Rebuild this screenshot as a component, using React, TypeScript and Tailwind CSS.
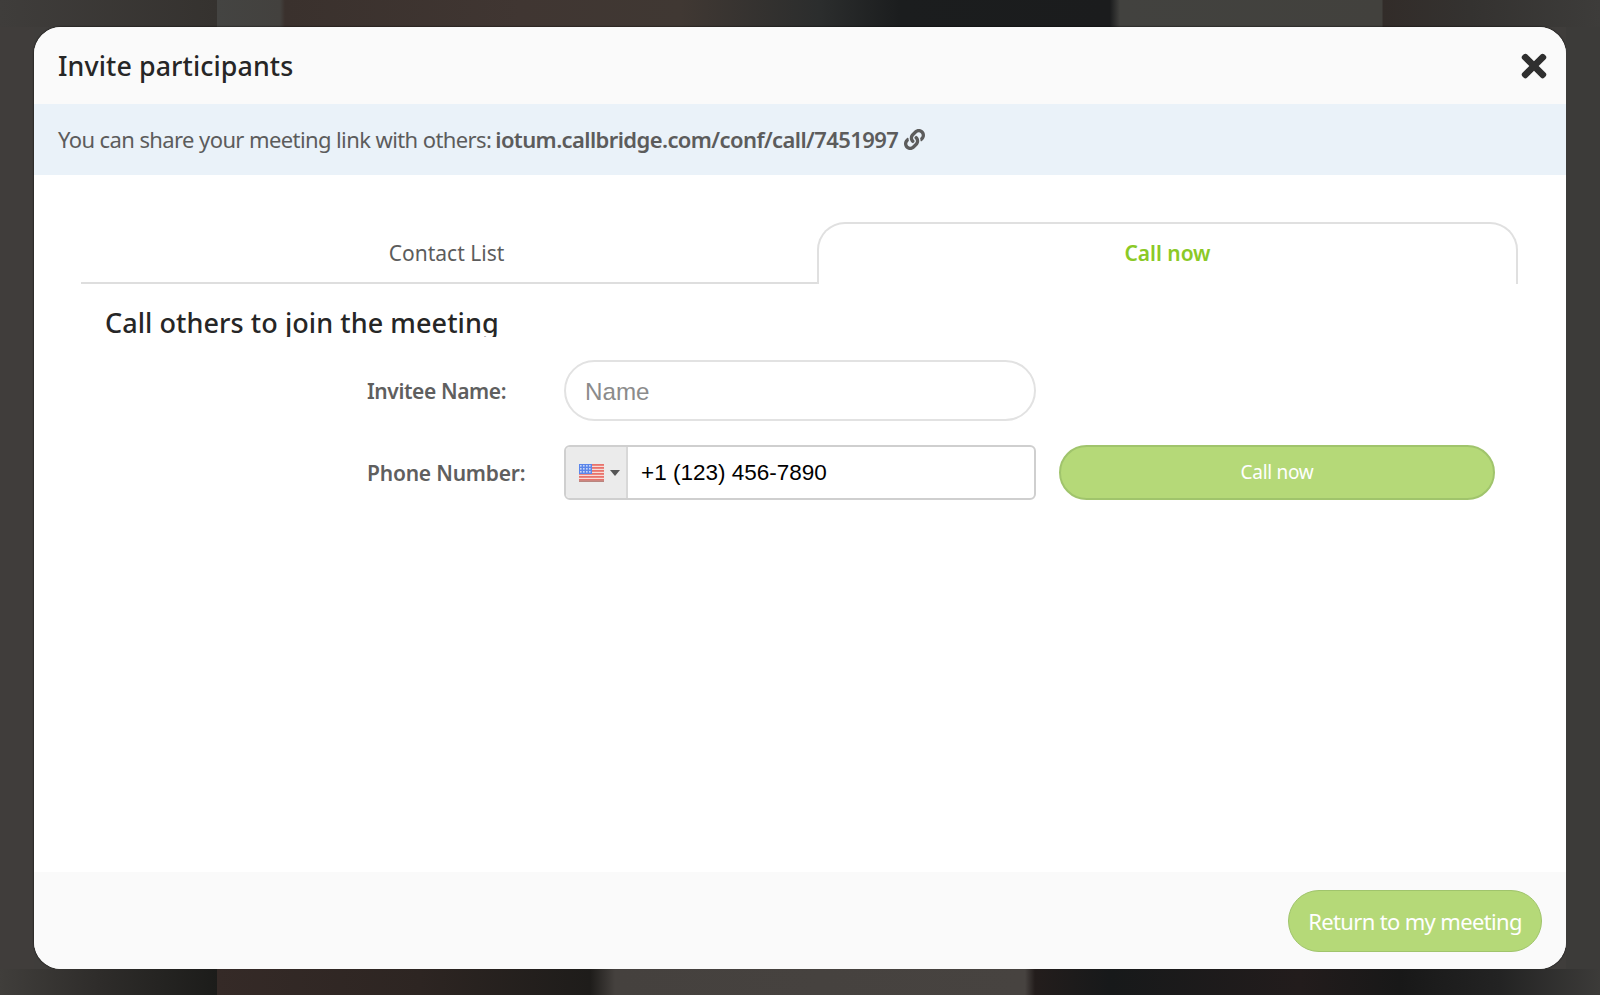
import React from "react";
import { FaTimes, FaLink } from "react-icons/fa";

const Flag = () => (
  <svg width="25" height="18" viewBox="0 0 25 18" className="block">
    <rect width="25" height="18" fill="#f6dcd8" />
    {[0, 3, 6, 9, 12, 15].map((y) => (
      <rect key={y} x="0" y={y} width="25" height="1.8" fill="#e8736c" />
    ))}
    <rect y="16.4" width="25" height="1.6" fill="#b9857f" />
    <rect width="13" height="10" fill="#5b86ea" />
    {[2, 5, 8].map((y) =>
      [2, 5, 8, 11].map((x) => <rect key={`${x}-${y}`} x={x - 1} y={y - 1} width="1.6" height="1.6" fill="#c9d6f5" />)
    )}
  </svg>
);

export default function App() {
  return (
    <div className="w-[1600px] h-[995px] flex flex-col overflow-hidden bg-[#3f3d3b]">
      <div className="h-[27px] shrink-0 bg-[linear-gradient(90deg,#3f3d3b_0px,#35322f_217px,#444442_217px,#43413e_280px,#3a312d_285px,#403632_520px,#403833_680px,#2b2d2d_820px,#1b1d1e_900px,#1b1c1d_1110px,#42423f_1120px,#42413d_1382px,#322c29_1383px,#343230_1470px,#3d3c3a_1600px)]" />
      <div className="h-[942px] shrink-0 flex">
        <div className="w-[34px] shrink-0 bg-[#403d3b]" />
        <div className="w-[1532px] shrink-0 flex flex-col rounded-[27px] overflow-hidden bg-white shadow-[0_0_2px_#000] font-['Noto_Sans',sans-serif]">
          <header className="h-[77px] shrink-0 bg-[#fafafa] flex items-center justify-between pl-[24px] pr-[17px]">
            <h1 className="text-[26.8px] font-medium text-[#262626] tracking-[0.1px] pt-[2px] font-['Noto_Sans',sans-serif]">Invite participants</h1>
            <FaTimes className="text-[#2f2f2f] w-[30px] h-[36px]" />
          </header>
          <div className="h-[71px] shrink-0 bg-[#eaf2f9] flex items-center pl-[24px] text-[22px] tracking-[-0.6px] text-[#5c5c5c]">
            <span>You can share your meeting link with others:</span>
            <span className="font-semibold ml-[4px] tracking-[-0.6px]">iotum.callbridge.com/conf/call/7451997</span>
            <FaLink className="ml-[6px] w-[21px] h-[21px] text-[#5c5c5c]" />
          </div>
          <main className="flex-1 bg-white pt-[47px]">
            <div className="ml-[47px] w-[1437px] flex h-[62px]">
              <div className="w-[736px] border-b-2 border-[#dedede] flex items-center justify-center text-[21px] tracking-[0.02px] text-[#5c5c5c] pr-[5px] pt-[3px]">
                Contact List
              </div>
              <div className="w-[701px] border-2 border-b-0 border-[#e0e0e0] rounded-t-[28px] flex items-center justify-center text-[21px] font-semibold tracking-[-0.05px] text-[#8bc926]">
                Call now
              </div>
            </div>
            <h2 className="ml-[71px] mt-[17px] h-[36px] overflow-hidden text-[27px] leading-[43px] font-medium text-[#262626] tracking-[0.07px]">
              Call others to join the meeting
            </h2>
            <div className="mt-[23px] ml-[333px] flex items-center h-[61px]">
              <label className="w-[197px] pt-[2px] text-[21px] font-semibold tracking-[-0.4px] text-[#5f5f5f]">Invitee Name:</label>
              <div className="w-[472px] h-[61px] rounded-full border-2 border-[#e2e2e2] bg-white pl-[19px] pt-[3px] flex items-center font-['Liberation_Sans',sans-serif] text-[24.2px] text-[#8b8b8b]">
                Name
              </div>
            </div>
            <div className="mt-[24px] ml-[333px] flex items-center h-[55px]">
              <label className="w-[197px] pt-[2px] text-[21px] font-semibold tracking-[-0.2px] text-[#5f5f5f]">Phone Number:</label>
              <div className="w-[472px] h-[55px] rounded-[6px] border-2 border-[#cfcfcf] bg-white flex items-center overflow-hidden">
                <div className="w-[62px] h-full shrink-0 bg-[#ebebeb] border-r-2 border-[#d8d8d8] flex items-center pl-[13px] gap-[6px]">
                  <Flag />
                  <span className="w-0 h-0 border-x-[5px] border-x-transparent border-t-[6px] border-t-[#555]" />
                </div>
                <span className="ml-[13px] font-['Liberation_Sans',sans-serif] text-[22.5px] text-black">+1 (123) 456-7890</span>
              </div>
              <button className="ml-[23px] w-[436px] h-[55px] rounded-full bg-[#b5d978] border-2 border-[#a0c46c] text-white text-[19px] tracking-[-0.3px]">
                Call now
              </button>
            </div>
          </main>
          <footer className="h-[97px] shrink-0 bg-[#fafafa] flex justify-end pt-[18px] pr-[24px]">
            <button className="w-[254px] h-[62px] rounded-full bg-[#b5d978] border border-[#a0c46c] text-white text-[22px] tracking-[-0.65px]">
              Return to my meeting
            </button>
          </footer>
        </div>
        <div className="w-[34px] shrink-0 bg-[#3c3b39]" />
      </div>
      <div className="h-[26px] shrink-0 bg-[linear-gradient(90deg,#403e3b_0px,#2e2c2a_100px,#1c1c1a_217px,#352a27_217px,#2d2522_420px,#1e1c1a_590px,#45413e_615px,#474340_1025px,#231d1c_1035px,#17191a_1110px,#221c1c_1300px,#181818_1400px,#232323_1500px,#3c3b39_1600px)]" />
    </div>
  );
}
